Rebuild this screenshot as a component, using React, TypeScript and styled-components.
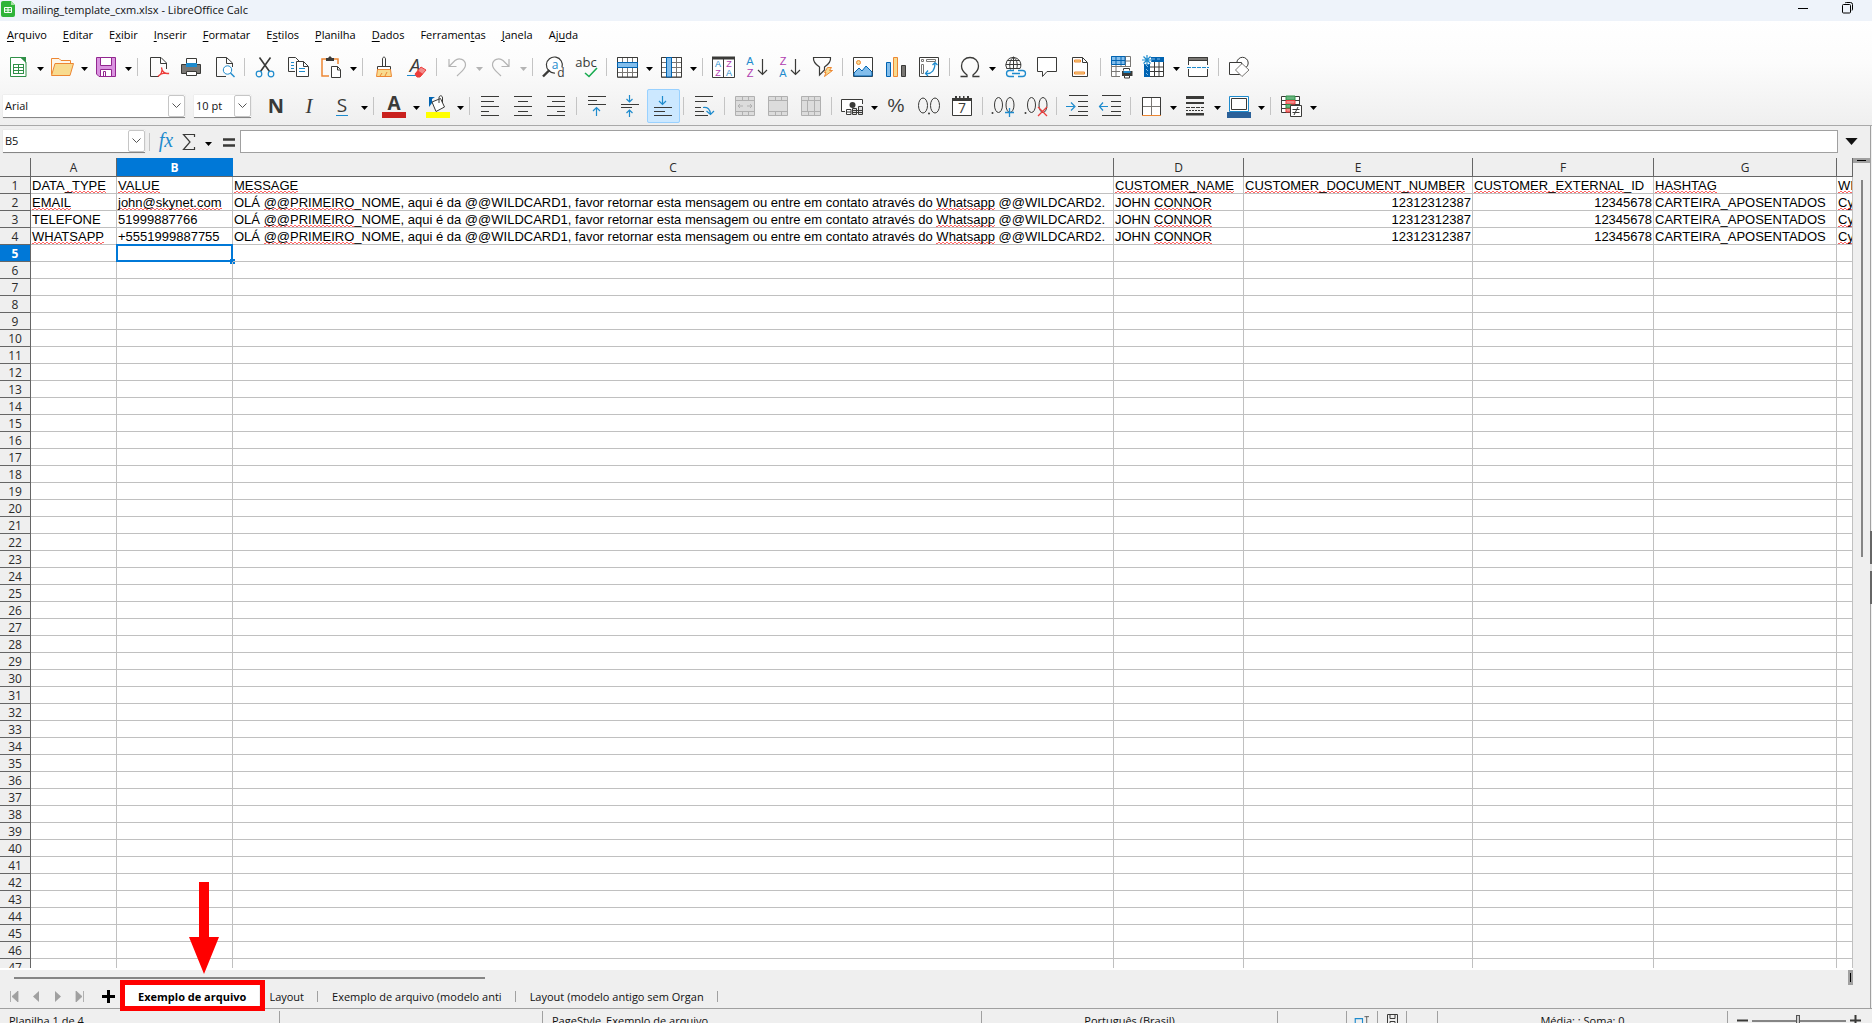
import React from "react";
import styled, { createGlobalStyle, css } from "styled-components";

const C = {
  ink: "#3a3a38",
  gray: "#797774",
  blue: "#1e8bcd",
  sky: "#83beec",
  navy: "#0063b1",
  orange: "#ed8733",
  cream: "#f8db8f",
  green: "#309048",
  purple: "#92278f",
  magenta: "#b03cb0",
  lilac: "#da93e0",
  red: "#ed3d3b",
  off: "#b4b4b4",
  panel: "#efefef",
  line: "#a0a0a0",
  accent: "#0078d7",
};

const UI = `"Open Sans", "Noto Sans", sans-serif`;
const SHEET = `"Liberation Sans", Arial, sans-serif`;

const GlobalStyle = createGlobalStyle`
  *, *::before, *::after { box-sizing: border-box; }
  body { margin: 0; overflow: hidden; background: ${C.panel}; }
  button, input, select { font: inherit; color: inherit; margin: 0; padding: 0; border: 0; border-radius: 0; background: none; }
`;

const Window = styled.div`
  display: flex;
  flex-direction: column;
  height: 100vh;
  font: 11px/16px ${UI};
  color: #111;
`;

/* ---------- title and menus ---------- */

const TitleBar = styled.header`
  display: flex;
  align-items: center;
  height: 21px;
  padding-right: 2px;
  background: #eef3fa;
  svg { display: block; }
`;
const Title = styled.h1`
  flex: 1;
  margin: 0 0 2px 7px;
  font: 11px/16px ${UI};
`;
const WindowButton = styled.button`
  display: flex;
  justify-content: center;
  align-items: flex-start;
  width: 45px;
  height: 18px;
`;
const Chrome = styled.div`
  background: linear-gradient(#fff, #fcfcfc 40%, #efefef);
  border-bottom: 1px solid #a9a9a9;
  padding-bottom: 2px;
`;
const MenuBar = styled.nav`
  display: flex;
  gap: 16px;
  height: 29px;
  padding: 0 7px 2px;
`;
const MenuItem = styled.button`
  color: #000;
  u { text-underline-offset: 2px; }
`;

/* ---------- toolbars ---------- */

const Toolbar = styled.div<{ $spaced?: boolean }>`
  display: flex;
  align-items: center;
  height: 34px;
  padding-left: ${(p) => (p.$spaced ? 3 : 2)}px;
  margin-top: ${(p) => (p.$spaced ? 5 : 0)}px;
`;
const Tool = styled.button<{ $active?: boolean }>`
  flex: none;
  width: 33px;
  height: 34px;
  padding: 0 5px 0 4px;
  svg { display: block; overflow: visible; }
  ${(p) =>
    p.$active &&
    css`
      background: #cce8ff;
      outline: 1px solid #99d1ff;
      outline-offset: -1px;
      border-radius: 2px;
    `}
`;
const Drop = styled.button<{ $off?: boolean; $width?: number }>`
  flex: none;
  display: flex;
  justify-content: center;
  align-items: center;
  width: ${(p) => p.$width ?? 11}px;
  height: 24px;
  padding-top: 4px;
  color: ${(p) => (p.$off ? C.off : "#000")};
`;
const Divider = styled.span`
  flex: none;
  width: 1px;
  height: 18px;
  margin: 0 4px 0 3px;
  background: #c4c4c4;
`;

const Combo = styled.div<{ $width: number }>`
  flex: none;
  display: grid;
  grid-template-columns: 1fr 17px;
  width: ${(p) => p.$width}px;
  height: 23px;
  margin-right: 9px;
  background: #fff;
  border-bottom: 1px solid #868686;
  box-shadow: 0 0 1px #ccc;
  select, input {
    grid-area: 1 / 1 / 2 / 3;
    width: 100%;
    padding-left: 2px;
    appearance: none;
    outline: none;
  }
`;
const ComboArrow = styled.span`
  grid-area: 1 / 2 / 2 / 3;
  display: flex;
  align-items: center;
  justify-content: center;
  border: 1px solid #c6c6c6;
  border-radius: 2px;
  background: #fff;
  pointer-events: none;
`;

/* ---------- workspace ---------- */

const Workspace = styled.main`
  flex: 1;
  min-height: 0;
  display: flex;
  background: ${C.panel};
`;
const Document = styled.div`
  flex: 1;
  min-width: 0;
  display: flex;
  flex-direction: column;
`;
const Sidebar = styled.aside`
  display: flex;
  align-items: center;
  width: 2px;
  background: linear-gradient(90deg, ${C.line} 1px, ${C.panel} 1px);
`;
const SidebarHandle = styled.button`
  width: 2px;
  height: 73px;
  && { background: linear-gradient(#666 33px, #ddd 33px 40px, #666 40px); }
`;
const FormulaBar = styled.div`
  display: flex;
  align-items: center;
  height: 32px;
  padding: 0 0 1px 3px;
  ${Combo} { margin-right: 1px; }
`;
const FormulaButton = styled.button`
  flex: none;
  width: 23px;
  height: 24px;
  svg { display: block; overflow: visible; }
`;
const FormulaInput = styled.input`
  flex: 1;
  min-width: 0;
  height: 23px;
  && {
    background: #fff;
    border: 1px solid ${C.line};
    padding: 0 4px;
  }
`;
const ExpandButton = styled.button`
  width: 26px;
  margin-right: 6px;
  svg { display: block; margin: auto; }
`;

const GridRow = styled.div`
  flex: 1;
  min-height: 0;
  display: flex;
`;
const GridPane = styled.div`
  flex: 1;
  min-width: 0;
  overflow: hidden;
  background: linear-gradient(${C.panel} 18px, #fff 18px);
`;
const GridClip = styled.div`
  height: calc(100% - 2px);
  overflow: hidden;
`;
const Sheet = styled.table`
  width: 100%;
  table-layout: fixed;
  border-collapse: separate;
  border-spacing: 0;
  th, td { padding: 0; }
`;
const ColHead = styled.th<{ $on?: boolean }>`
  height: 19px;
  && { padding-top: 1px; }
  font: ${(p) => (p.$on ? "bold" : "normal")} 12px/17px ${UI};
  color: ${(p) => (p.$on ? "#fff" : "#2a2a2a")};
  background: ${(p) => (p.$on ? C.accent : C.panel)};
  border-right: 1px solid ${(p) => (p.$on ? C.accent : "#666")};
  border-bottom: 1px solid #666;
`;
const RowHead = styled.th<{ $on?: boolean }>`
  height: 17px;
  && { padding-top: 2px; }
  font: ${(p) => (p.$on ? "bold" : "normal")} 12px/14px ${UI};
  color: ${(p) => (p.$on ? "#fff" : "#2a2a2a")};
  background: ${(p) => (p.$on ? C.accent : C.panel)};
  border-right: 1px solid #666;
  border-bottom: 1px solid #666;
`;
const Cell = styled.td<{ $num?: boolean; $cursor?: boolean }>`
  position: relative;
  height: 17px;
  font: 13px/14px ${SHEET};
  color: #000;
  white-space: nowrap;
  text-align: ${(p) => (p.$num ? "right" : "left")};
  && { padding: 2px 1px 0; }
  overflow: ${(p) => (p.$cursor ? "visible" : "hidden")};
  border-right: 1px solid #c0c0c0;
  border-bottom: 1px solid #c0c0c0;
`;
const Cursor = styled.span`
  position: absolute;
  inset: -1px -1px -1px -1px;
  border: 2px solid ${C.accent};
  &::after {
    content: "";
    position: absolute;
    right: -4px;
    bottom: -4px;
    width: 5px;
    height: 5px;
    background: ${C.accent};
  }
`;
const Typo = styled.span`
  display: inline-block;
  height: 14px;
  vertical-align: top;
  background:
    linear-gradient(90deg, #ff6464 2px, transparent 2px) 0 100% / 4px 1px repeat-x,
    linear-gradient(90deg, transparent 2px, #ff6464 2px) 0 calc(100% - 1px) / 4px 1px repeat-x;
`;

const VScroll = styled.div`
  width: 17px;
  display: flex;
  flex-direction: column;
  align-items: center;
`;
const VSplit = styled.button`
  width: 17px;
  height: 5px;
  && { background: linear-gradient(#000, #000) center / 9px 1px no-repeat ${C.line}; }
`;
const VThumb = styled.div`
  width: 2px;
  height: 46.4%;
  margin-top: 17px;
  background: #858585;
`;
const HScroll = styled.div`
  display: flex;
  align-items: center;
  justify-content: space-between;
  height: 15px;
  padding: 0 17px 0 14px;
`;
const HThumb = styled.div`
  width: 25.6%;
  height: 2px;
  background: #858585;
`;
const HSplit = styled.button`
  width: 5px;
  height: 15px;
  && { background: linear-gradient(#000, #000) center / 1px 9px no-repeat ${C.line}; }
`;

const TabBar = styled.div`
  display: flex;
  height: 23px;
  padding-left: 3px;
`;
const NavButton = styled.button<{ $wide?: boolean }>`
  width: ${(p) => (p.$wide ? 34 : 22)}px;
  svg { display: block; margin: auto; }
`;
const Tab = styled.button<{ $current?: boolean }>`
  position: relative;
  padding: 0 14px;
  ${(p) =>
    p.$current
      ? css`
          && { background: #fff; }
          padding: 0 13px;
          margin-right: -4px;
          font-weight: bold;
          color: #000;
        `
      : css`
          &::after {
            content: "";
            position: absolute;
            right: 0;
            top: 6px;
            width: 1px;
            height: 11px;
            background: ${C.line};
          }
        `}
`;
const Highlight = styled.span`
  position: absolute;
  z-index: 2;
  inset: -5px -6px -3px -5px;
  border: 5px solid #f00;
  svg {
    position: absolute;
    left: 64px;
    bottom: 32px;
  }
`;

const StatusBar = styled.footer`
  display: grid;
  grid-template-columns: 280fr 263fr 439fr 296fr 69px 31px 29px 31px 290fr 142px;
  height: 15px;
  padding-right: 2px;
  overflow: hidden;
  background: ${C.panel};
  border-top: 1px solid ${C.line};
`;
const Status = styled.div<{ $center?: boolean }>`
  height: 24px;
  margin-top: 2px;
  padding: 0 9px;
  line-height: 19px;
  white-space: nowrap;
  text-align: ${(p) => (p.$center ? "center" : "left")};
  border-right: 1px solid ${C.line};
  &:last-child { border: 0; }
  svg { display: block; margin: 3px auto; }
`;
const ZoomBox = styled.div`
  display: flex;
  align-items: flex-start;
  gap: 4px;
  padding-top: 1px;
  button { width: 11px; }
  button svg { margin: 3px 0 0; }
`;
const ZoomRange = styled.input`
  flex: 1;
  min-width: 0;
  height: 17px;
  appearance: none;
  && { background: linear-gradient(#858585, #858585) center / 100% 2px no-repeat; }
  &::-webkit-slider-thumb {
    appearance: none;
    width: 4px;
    height: 11px;
    background: #ccc;
    border: 1px solid #555;
  }
`;

/* ---------- icons, all drawn on a 24 by 24 field ---------- */

const L = ({ d, c = C.ink, f = "none", w = 1 }: { d: string; c?: string; f?: string; w?: number }) => (
  <path d={d} stroke={c} fill={f} strokeWidth={w} />
);
const FACES: Record<string, string> = {
  serif: "Liberation Serif, serif",
  plain: "Liberation Sans, sans-serif",
  ui: "Open Sans, sans-serif",
};
const T = ({ x, y, s, c = C.ink, b, i, children, face = "ui" }: any) => (
  <text
    x={x}
    y={y}
    fontSize={s}
    fill={c}
    fontWeight={b ? 700 : 400}
    fontStyle={i ? "italic" : "normal"}
    textAnchor="middle"
    fontFamily={FACES[face]}
  >
    {children}
  </text>
);

const table = "M2.5 2.5H22.5V22.5H2.5ZM7.5 2.5V22.5M12.5 2.5V22.5M17.5 2.5V22.5M2.5 7.5H22.5M2.5 12.5H22.5M2.5 17.5H22.5";
const merged = (inner: string) => (
  <>
    <L d="M2.5 2.5H21.5V21.5H2.5Z" c="#b0b0b0" f="#dcdcdc" />
    <L d={"M2.5 6.5H21.5M2.5 17.5H21.5M9.5 2.5V6.5M15.5 2.5V6.5M9.5 17.5V21.5M15.5 17.5V21.5" + inner} c="#b0b0b0" />
  </>
);

const ICONS: Record<string, React.ReactNode> = {
  new: (
    <>
      <L d="M4.5 2.5H15L20 7V21.5H4.5Z" c={C.green} f="#fff" />
      <path d="M14 2H20V8Z" fill={C.green} />
      <L d="M7 9.5H18M7 12.5H18M7 15.5H18M7 18.5H18M7.5 9V19M12.5 9V19M17.5 9V19" c={C.green} />
    </>
  ),
  open: (
    <>
      <L d="M1.5 19.5V3.5H9L11 5.5H20.5V8" c={C.orange} f="#fdf6ea" />
      <L d="M1.5 20.5L5 8.5H23.5L20 20.5Z" c={C.orange} f={C.cream} />
    </>
  ),
  save: (
    <>
      <L d="M2.5 2.5H21.5V21.5H5L2.5 19Z" c={C.purple} f={C.lilac} />
      <L d="M6.5 2.5H17.5V10.5H6.5Z" c={C.purple} f="#fff" />
      <L d="M6.5 21.5V14.5H17.5V21.5ZM9.5 21V16.5H11.5V21" c={C.purple} f="#fff" />
    </>
  ),
  pdf: (
    <>
      <L d="M13 21.5H4.5V2.5H15L20.5 8V14M14.5 2.5V8.5H20" />
      <L d="M12 21.5C15 20 17 16 15.5 12.5C16 17 19 19 23 18.5C18 17.5 14.5 18.5 12 21.5Z" c={C.red} w={1.3} />
    </>
  ),
  print: (
    <>
      <L d="M7.5 9V3.5H17.5V9" f="#fff" />
      <path d="M2.5 9.500H21.500V18.500H2.500Z" fill={C.gray} stroke={C.ink} />
      <path d="M7 8H18V12H7Z" fill={C.blue} />
      <L d="M7.5 16.5H17.5V20.5H7.5Z" f="#fff" />
    </>
  ),
  preview: (
    <>
      <L d="M20.5 12V8L14.5 2.5H4.5V21.5H14M14.5 2.5V8.5H20" />
      <circle cx="15.5" cy="15" r="4.2" fill="#fff" stroke={C.blue} />
      <L d="M18.5 18L22.5 22" c={C.blue} w={1.4} />
    </>
  ),
  cut: (
    <>
      <L d="M6.5 2.5L16.5 16.5M17.5 2.5L7.5 16.5" w={1.6} />
      <circle cx="6" cy="19" r="2.8" fill="none" stroke={C.blue} strokeWidth="1.2" />
      <circle cx="18" cy="19" r="2.8" fill="none" stroke={C.blue} strokeWidth="1.2" />
    </>
  ),
  copy: (
    <>
      <L d="M9 16.5H2.5V2.5H9.5L13.5 6.5" />
      <L d="M10.5 6.5H17.5L22.5 11.5V21.5H10.5ZM17.5 6.5V11.5H22" f="#fff" />
      <L d="M5 7.5H8M5 10.5H8M13 13.5H19M13 16.5H19M5 13.5H8" c={C.blue} />
    </>
  ),
  paste: (
    <>
      <L d="M10 21H3V4H19V9" c={C.orange} w={1.5} />
      <path d="M7 6V3H9L11 1L13 3H15V6Z" fill={C.ink} />
      <L d="M12.5 11.5H18.5L21.5 14.5V22.5H12.5ZM18.5 11.5V15H21" f="#fff" />
    </>
  ),
  brush: (
    <>
      <L d="M11.5 11V4C11.5 1.5 14.5 1.5 14.5 4V11" />
      <L d="M6.5 15V11.5H19.5V15" f="#fff" />
      <L d="M6.5 14.5H19.5L20.5 21.5H5.5Z" c={C.orange} f={C.cream} />
      <L d="M9 21L11 18M14 21L16 17" c={C.orange} />
    </>
  ),
  clear: (
    <>
      <T x={11} y={17} s={19} i>A</T>
      <L d="M3 20.5H12" c={C.blue} />
      <path d="M11 19L17 12L22 15L16 22H13Z" fill="#f28b8b" stroke={C.red} />
      <path d="M11 19L14 15.5L19 19L16 22H13Z" fill={C.red} />
    </>
  ),
  undo: <L d="M4 4V11.500H11.500M4.500 11L10 5.500C14 2 20.500 4.500 20.500 10C20.500 14 17 16 12 21" c={C.off} w={1.2} />,
  redo: <L d="M20 4V11.500H12.500M19.500 11L14 5.500C10 2 3.500 4.500 3.500 10C3.500 14 7 16 12 21" c={C.off} w={1.2} />,
  find: (
    <>
      <path d="M21 12.500A8 8 0 1 0 14 18" fill="#fff" stroke={C.ink} strokeWidth="1.2" />
      <L d="M8.5 15L2 21.5" w={2.4} />
      <T x={14} y={14} s={12} c={C.blue}>a</T>
      <T x={20} y={22} s={12}>d</T>
    </>
  ),
  abc: (
    <>
      <T x={12} y={12} s={13}>abc</T>
      <L d="M11 18L15 21.5L23 13" c="#18ab50" w={1.6} />
    </>
  ),
  rowTable: (
    <>
      <L d={table} c={C.gray} f="#fff" />
      <L d="M2.5 2.5H22.5V22H2.5Z" />
      <L d="M2.5 7.5H22.5V12.5H2.5Z" c={C.navy} f={C.sky} />
    </>
  ),
  colTable: (
    <>
      <L d={table} c={C.gray} f="#fff" />
      <L d="M2.5 2.5H22.5V22H2.5Z" />
      <L d="M7.5 2.5V22H12.5V2.5Z" c={C.navy} f={C.sky} />
    </>
  ),
  sort: (
    <>
      <L d="M1.5 2.5H23.5V22.5H1.5ZM12.5 2V22" f="#fff" />
      <path d="M1 1.5H24V4.5H1Z" fill={C.ink} />
      <T x={7} y={12} s={9} c={C.blue} face="plain">A</T>
      <T x={7} y={21} s={9} c={C.magenta} face="plain">Z</T>
      <T x={18} y={12} s={9} c={C.magenta} face="plain">Z</T>
      <T x={18} y={21} s={9} c={C.blue} face="plain">A</T>
    </>
  ),
  az: (
    <>
      <T x={6} y={10} s={11} c={C.blue} face="plain">A</T>
      <T x={6} y={22} s={11} c={C.magenta} face="plain">Z</T>
      <L d="M18.5 4V19M14 15L18.5 19.5L23 15" w={1.2} />
    </>
  ),
  za: (
    <>
      <T x={6} y={10} s={11} c={C.magenta} face="plain">Z</T>
      <T x={6} y={22} s={11} c={C.blue} face="plain">A</T>
      <L d="M18.5 4V19M14 15L18.5 19.5L23 15" w={1.2} />
    </>
  ),
  filter: (
    <>
      <L d="M3.5 2.5H20.5C21 6 19 9 14.5 12V15L9.5 20V12C5 9 3 6 3.5 2.5Z" w={1.2} />
      <path d="M17.500 12.500H21.500L19.500 15.500H22.500L14.500 21.500L16 17.500H14.500Z" fill={C.cream} stroke={C.orange} />
    </>
  ),
  image: (
    <>
      <L d="M2.5 2.5H21.5V21.5H2.5Z" f="#fff" />
      <path d="M3 21V18L8 13L11 16L15 11L21 17V21Z" fill={C.sky} stroke={C.navy} />
      <circle cx="7.5" cy="7.5" r="2" fill={C.cream} stroke={C.orange} />
    </>
  ),
  chart: (
    <>
      <L d="M2.5 7.5H6.5V21.5H2.5Z" c={C.navy} f={C.sky} />
      <L d="M9.5 2.5H13.5V21.5H9.5Z" c={C.orange} f={C.cream} />
      <L d="M17.5 10.5H21.5V21.5H17.5Z" f={C.gray} />
    </>
  ),
  pivot: (
    <>
      <L d="M2.5 2.5H21.5V21.5H2.5Z" f="#fff" />
      <L d="M4.5 4.5H6.5V6.5H4.5ZM9.5 4.5H18.5V6.5H9.5ZM4.5 9.5H6.5V18.5H4.5Z" c={C.gray} />
      <L d="M9 18.5C15 19 18 15 18 8M15.5 10L18 7.5L20.5 10M11 15.5L8.5 18.5L11 21" c={C.blue} w={1.2} />
    </>
  ),
  omega: <L d="M2.5 21.5H9V20C5 17 3.5 14 3.5 11C3.5 5.5 7.5 2.5 12 2.5S20.5 5.5 20.5 11C20.5 14 19 17 15 20V21.5H21.5" w={1.3} />,
  link: (
    <>
      <path d="M12 2.500A7.500 7.500 0 0 0 5 14M4 9.500H19M5.500 5.500H17.500M5 13.500H18M11.500 2V14.500M11.500 2C7.500 5 7 11 8.500 14.500M11.500 2C15.500 5 16 11 14.500 14M11.500 2.500A7.500 7.500 0 0 1 18 13.500" fill="none" stroke={C.ink} />
      <path d="M12 15.500H7.500A3 3 0 0 0 7.500 21.500H12M16 15.500H20.500A3 3 0 0 1 20.500 21.500H16M10 18.500H18" fill="none" stroke={C.blue} strokeWidth="1.3" />
    </>
  ),
  comment: <L d="M2.5 2.5H21.5V16.5H12L7.5 21.5V16.5H2.5Z" f="#fff" />,
  header: (
    <>
      <L d="M4.5 2.5H14.5L19.5 7.5V21.5H4.5ZM14.5 2.5V7.5H19" f="#fff" />
      <L d="M6.5 5H12.5V7H6.5ZM6.5 17H16.5V19H6.5Z" c={C.orange} f={C.cream} />
    </>
  ),
  printArea: (
    <>
      <L d="M2.5 1.5H21.5V21.5H2.5ZM2.5 6H21M2.5 11.5H21M2.5 16.5H21M7 2V21M12 2V21M16.5 2V21" c={C.gray} f="#fff" />
      <L d="M2.5 1.5H16V9.5H2.5ZM2.5 5.5H16M7 1.5V9.5M12 1.5V9.5" c={C.navy} f={C.sky} />
      <path d="M11 12H24V24H11Z" fill="#fcfcfc" />
      <path d="M13 16H23.5V21H13Z" fill={C.ink} />
      <L d="M14.5 15.500V13.5H20.5V15.500M15.5 20.500H20.500V23H15.5Z" f="#fff" />
      <path d="M14.500 16H21.500V18H14.500Z" fill={C.blue} />
    </>
  ),
  freeze: (
    <>
      <L d="M2.5 2.5H21.5V21.5H2.5ZM8 12H21M8 16.5H21M12.5 7V21M17 7V21" f="#fff" />
      <path d="M2 2H22V7H8V22H2Z" fill={C.navy} />
      <path d="M10 4H13M15 4H18M4 10L6 12M4 14L6 16M4 18L6 20" stroke={C.sky} />
      <circle cx="5" cy="5" r="4.5" fill="#fff" />
      <L d="M5 0V10M0 5H10M1.5 1.5L8.5 8.5M8.5 1.5L1.5 8.5" c={C.blue} w={1.2} />
    </>
  ),
  split: (
    <>
      <L d="M2.5 10V2.5H21.5V10M2.5 14V21.5H21.5V14" f="#fff" />
      <path d="M2.500 2.500H21.500V5.500H2.500Z" fill={C.gray} stroke={C.ink} />
      <path d="M1 12.5H23" stroke={C.blue} strokeDasharray="4 1" />
    </>
  ),
  shapes: (
    <>
      <circle cx="15.5" cy="8" r="5.7" fill="#fff" stroke={C.ink} />
      <L d="M2.5 7.5H14.5V19.5H2.5Z" f="#fff" />
      <path d="M15 8.5L22 15L15 21.5L8.5 15Z" fill="#fff" stroke={C.gray} />
    </>
  ),
  bold: <T x={12} y={19} s={20} b>N</T>,
  italic: <T x={12} y={19} s={21} i face="serif">I</T>,
  underline: (
    <>
      <T x={12} y={18} s={19}>S</T>
      <L d="M6 21.5H18" c={C.blue} />
    </>
  ),
  fontColor: (
    <>
      <T x={12} y={16} s={19} b>A</T>
      <path d="M0 18H24V24H0Z" fill="#c9211e" />
    </>
  ),
  fill: (
    <>
      <path d="M3 13V3H9L6 5V9Z" fill={C.navy} />
      <L d="M6 8L14.5 4.5L18.5 13L10 17.5ZM13 9V4C13 1 16.5 1 16.5 4V9" f="#fff" />
      <path d="M0 18H24V24H0Z" fill="#ff0" />
    </>
  ),
  left: <L d="M3 2.5H21M3 7.5H16M3 12.5H21M3 17.5H11M3 21.5H21" w={1.2} />,
  center: <L d="M3 2.5H21M7 7.5H17M3 12.5H21M7 17.5H17M3 21.5H21" w={1.2} />,
  right: <L d="M3 2.5H21M8 7.5H21M3 12.5H21M13 17.5H21M3 21.5H21" w={1.2} />,
  top: (
    <>
      <L d="M3 2.5H21M3 6.5H12M3 10.5H21" w={1.2} />
      <L d="M11.5 22V14M8 17L11.5 13.5L15 17" c={C.blue} w={1.2} />
    </>
  ),
  middle: (
    <>
      <L d="M3 10.5H21M3 13.5H14" w={1.2} />
      <L d="M11.5 1V8M8.5 5L11.5 8L14.5 5M11.5 23V16M8.5 19L11.5 16L14.5 19" c={C.blue} w={1.2} />
    </>
  ),
  bottom: (
    <>
      <L d="M3 13.5H21M3 17.5H14M3 21.5H21" w={1.2} />
      <L d="M11.5 2V10M8 7L11.5 10.5L15 7" c={C.blue} w={1.2} />
    </>
  ),
  wrap: (
    <>
      <L d="M3 2.5H21M3 7.5H15M3 13.5H9M3 17.5H12M3 21.5H16" w={1.2} />
      <L d="M11 13.5C16 13 18 15 18.5 20M14.5 17L18.5 20.5L22 17" c={C.blue} w={1.2} />
    </>
  ),
  merge1: merged("M5 12H10M14 12H19M7 10L5 12L7 14M17 10L19 12L17 14"),
  merge2: merged(""),
  merge3: merged("M8.5 6V17M15.5 6V17"),
  currency: (
    <>
      <L d="M5 17.5H1.5V5.5H22.5V10" f="#fff" />
      <circle cx="12.5" cy="11" r="3" fill={C.ink} />
      <L d="M6.5 15.5H11V20.5H6.5ZM6.5 18H11" f="#fff" />
      <L d="M12.5 14.5H16.500V20.5H12.5ZM18.5 12.5H22.5V20.5H18.5ZM12.5 16.500H22M12.5 18.5H22" f="#ddd" />
    </>
  ),
  percent: <T x={12} y={18} s={19} face="plain">%</T>,
  decimal: (
    <>
      <ellipse cx="6" cy="11.5" rx="4.5" ry="7.5" fill="none" stroke={C.ink} />
      <ellipse cx="18" cy="11.5" rx="4.5" ry="7.5" fill="none" stroke={C.ink} />
      <circle cx="12" cy="19.5" r="1" fill={C.ink} />
    </>
  ),
  date: (
    <>
      <L d="M2.5 5.5H21.5V21.5H2.5Z" f="#fff" />
      <path d="M2 4H22V7H2ZM5 2H7V5H5ZM17 2H19V5H17ZM9 2H10.5V5H9ZM13 2H14.5V5H13Z" fill={C.ink} />
      <T x={12} y={19} s={14}>7</T>
    </>
  ),
  addDec: (
    <>
      <circle cx="1.5" cy="19" r="1" fill={C.ink} />
      <ellipse cx="7.5" cy="11" rx="4" ry="7.5" fill="none" stroke={C.ink} />
      <ellipse cx="19" cy="11" rx="4" ry="7.5" fill="none" stroke={C.ink} />
      <L d="M18.5 14V23M14 18.5H23" c={C.blue} w={1.3} />
    </>
  ),
  delDec: (
    <>
      <circle cx="1.5" cy="19" r="1" fill={C.ink} />
      <ellipse cx="7.5" cy="11" rx="4" ry="7.5" fill="none" stroke={C.ink} />
      <ellipse cx="19" cy="11" rx="4" ry="7.5" fill="none" stroke={C.ink} />
      <L d="M14 13L23 22M23 13L14 22" c={C.red} w={1.3} />
    </>
  ),
  indent: (
    <>
      <L d="M4 1.5H23M13 7.5H23M13 12.5H23M13 17.5H23M4 21.5H23" w={1.2} />
      <L d="M1 12.5H9M6 8.5L10 12.5L6 16.5" c={C.blue} w={1.2} />
    </>
  ),
  outdent: (
    <>
      <L d="M4 1.5H23M13 7.5H23M13 12.5H23M13 17.5H23M4 21.5H23" w={1.2} />
      <L d="M2 12.5H10M5 8.5L1.5 12.5L5 16.5" c={C.blue} w={1.2} />
    </>
  ),
  borders: (
    <>
      <L d="M3.5 21V3.5H21.5V21M12.5 3.5V21M3.5 12.5H21.5" c={C.gray} f="#fff" />
      <L d="M3.5 21V3.5H21.5V21" />
      <L d="M3 21.5H22" c={C.orange} />
    </>
  ),
  lines: (
    <>
      <path d="M3 2H21V5H3ZM3 8H21V10H3ZM3 19H21V21.5H3Z" fill={C.ink} />
      <path d="M3 13.5H21" stroke={C.ink} strokeDasharray="4 1" />
      <path d="M3 16.5H21" stroke={C.ink} strokeDasharray="2 1" />
    </>
  ),
  lineColor: (
    <>
      <L d="M2.5 2.5H21.5V17.5H2.5Z" c={C.blue} f="#fff" />
      <L d="M4.5 4.5H19.5V15.5H4.5Z" f="#fff" />
      <path d="M0 18H24V24H0Z" fill="#2a6099" />
    </>
  ),
  conditional: (
    <>
      <L d="M2.5 2.5H20.5V18.5H2.5ZM2.5 6.5H20M2.5 10.5H20M2.5 14.5H20" f="#fff" />
      <path d="M7 2H16V6H7Z" fill="#68b57e" stroke={C.green} />
      <path d="M7 6.5H16V10H7ZM7 14.5H12V18H7Z" fill="#f28b8b" stroke={C.red} />
      <path d="M7 10.5H12V14H7Z" fill="#68b57e" stroke={C.green} />
      <L d="M11.5 11.5H22.5V22.5H11.5Z" f="#fff" />
      <L d="M13.5 15.5H20.5M13.5 18.5H20.5M19 13L15 21" />
    </>
  ),
  fx: <T x={12} y={17} s={20} c={C.blue} i face="serif">fx</T>,
  sigma: <L d="M17.5 7V4.5H6.5L13 12L6.5 19.5H17.5V17" w={1.2} />,
  equals: <L d="M6 9.5H18M6 15.5H18" w={2.4} />,
};

const Icon = ({ name }: { name: string }) => (
  <svg width="24" height="24" viewBox="0 0 24 24" aria-hidden="true">
    {ICONS[name]}
  </svg>
);
const Triangle = ({ size = 7 }: { size?: number }) => (
  <svg width={size} height={(size + 1) / 2} viewBox="0 0 7 4" aria-hidden="true">
    <path d="M0 0H7L3.5 4Z" fill="currentColor" />
  </svg>
);
const Chevron = () => (
  <svg width="9" height="6" viewBox="0 0 9 6" aria-hidden="true">
    <path d="M.5 .5L4.5 4.5L8.5 .5" fill="none" stroke="#555" />
  </svg>
);

/* "|" is a divider, ":v" adds a drop-down arrow, ":-" greys that arrow, ":!" marks the pressed tool */
const STANDARD =
  "new:v open:v save:v | pdf print preview | cut copy paste:v | brush clear | undo:- redo:- | find abc | rowTable:v colTable:v | sort az za filter | image chart pivot | omega:v link comment header | printArea freeze:v split | shapes";
const FORMATTING =
  "bold italic underline:v | fontColor:v fill:v | left center right | top middle bottom:! | wrap | merge1 merge2 merge3 | currency:v percent decimal date | addDec delDec | indent outdent | borders:v lines:v lineColor:v | conditional:v";

const Tools = ({ items }: { items: string }) => (
  <>
    {items.split(" ").map((item, i) => {
      if (item === "|") return <Divider key={i} />;
      const [name, flag] = item.split(":");
      return (
        <React.Fragment key={i}>
          <Tool type="button" aria-label={name} $active={flag === "!"}>
            <Icon name={name} />
          </Tool>
          {(flag === "v" || flag === "-") && (
            <Drop type="button" aria-label={`${name} menu`} $off={flag === "-"}>
              <Triangle />
            </Drop>
          )}
        </React.Fragment>
      );
    })}
  </>
);

/* ---------- data ---------- */

const MENUS = ["_Arquivo", "_Editar", "E_xibir", "_Inserir", "_Formatar", "E_stilos", "_Planilha", "_Dados", "Ferramen_tas", "_Janela", "Aj_uda"];
const COLUMNS: [string, number?][] = [["A", 86], ["B", 116], ["C", 881], ["D", 130], ["E", 229], ["F", 181], ["G", 183], [""]];

/* words between ~ marks carry the spelling underline */
const MESSAGE =
  "OLÁ ~@@PRIMEIRO~_NOME, aqui é da @@WILDCARD1, favor retornar esta mensagem ou entre em contato através do ~Whatsapp~ @@WILDCARD2.";
const record = (type: string, value: string) => [type, value, MESSAGE, "JOHN ~CONNOR~", "12312312387", "12345678", "CARTEIRA_APOSENTADOS", "~Cy~"];
const ROWS = [
  ["DATA~_TYPE~", "~VALUE~", "~MESSAGE~", "~CUSTOMER_NAME~", "~CUSTOMER_DOCUMENT_NUMBER~", "~CUSTOMER_EXTERNAL~_ID", "~HASHTAG~", "~WI~"],
  record("~EMAIL~", "~john@skynet.com~"),
  record("TELEFONE", "51999887766"),
  record("~WHATSAPP~", "+5551999887755"),
];
const TABS = ["Layout", "Exemplo de arquivo (modelo anti", "Layout (modelo antigo sem Organ"];

const spell = (text: string) => text.split("~").map((part, i) => (i % 2 ? <Typo key={i}>{part}</Typo> : part));

export default function App() {
  return (
    <Window>
      <GlobalStyle />
      <TitleBar>
        <svg width="15" height="21" viewBox="0 0 15 21" aria-hidden="true">
          <path d="M1 3Q1 1 3 1H11L15 5V15Q15 17 13 17H3Q1 17 1 15Z" fill="#2fb43a" />
          <path d="M11 1L15 5H11Z" fill="#a5e3a3" />
          <path d="M4.5 7.5H11.5V12.5H4.5ZM4.5 10H11.5M8 7.5V12.5" fill="none" stroke="#fff" />
        </svg>
        <Title>mailing_template_cxm.xlsx - LibreOffice Calc</Title>
        <WindowButton type="button" aria-label="Minimizar">
          <svg width="10" height="14" viewBox="0 0 10 14"><path d="M0 6.5H10" stroke="#000" /></svg>
        </WindowButton>
        <WindowButton type="button" aria-label="Restaurar">
          <svg width="11" height="12" viewBox="0 0 11 12">
            <path d="M.5 3.5Q.5 2.5 1.5 2.5H7.5Q8.5 2.5 8.5 3.5V10Q8.5 11 7.5 11H1.5Q.5 11 .5 10ZM3 1Q3.5 .5 4.5 .5H8.5Q10.5 .5 10.5 2.5V7Q10.5 8 10 8.5" fill="none" stroke="#000" />
          </svg>
        </WindowButton>
      </TitleBar>

      <Chrome>
        <MenuBar>
          {MENUS.map((label) => {
            const [before, rest] = label.split("_");
            return (
              <MenuItem type="button" key={label}>
                {before}
                <u>{rest[0]}</u>
                {rest.slice(1)}
              </MenuItem>
            );
          })}
        </MenuBar>
        <Toolbar>
          <Tools items={STANDARD} />
        </Toolbar>
        <Toolbar $spaced>
          <Combo $width={182}>
            <select aria-label="Nome da fonte"><option>Arial</option></select>
            <ComboArrow><Chevron /></ComboArrow>
          </Combo>
          <Combo $width={57}>
            <select aria-label="Tamanho da fonte"><option>10 pt</option></select>
            <ComboArrow><Chevron /></ComboArrow>
          </Combo>
          <Tools items={FORMATTING} />
        </Toolbar>
      </Chrome>

      <Workspace>
        <Document>
          <FormulaBar>
            <Combo $width={142}>
              <input aria-label="Caixa de nome" defaultValue="B5" />
              <ComboArrow><Chevron /></ComboArrow>
            </Combo>
            <Divider />
            <FormulaButton type="button" aria-label="Assistente de funções"><Icon name="fx" /></FormulaButton>
            <FormulaButton type="button" aria-label="Soma"><Icon name="sigma" /></FormulaButton>
            <Drop type="button" aria-label="Mais funções" $width={17}><Triangle /></Drop>
            <FormulaButton type="button" aria-label="Fórmula"><Icon name="equals" /></FormulaButton>
            <FormulaInput aria-label="Linha de entrada" />
            <ExpandButton type="button" aria-label="Expandir"><Triangle size={13} /></ExpandButton>
          </FormulaBar>

          <GridRow>
            <GridPane>
              <GridClip>
                <Sheet>
                  <colgroup>
                    <col style={{ width: 31 }} />
                    {COLUMNS.map(([name, width]) => (
                      <col key={name} style={{ width }} />
                    ))}
                  </colgroup>
                  <thead>
                    <tr>
                      <ColHead />
                      {COLUMNS.map(([name]) => (
                        <ColHead key={name} scope="col" $on={name === "B"}>{name}</ColHead>
                      ))}
                    </tr>
                  </thead>
                  <tbody>
                    {Array.from({ length: 47 }, (_, r) => (
                      <tr key={r}>
                        <RowHead scope="row" $on={r === 4}>{r + 1}</RowHead>
                        {COLUMNS.map(([name], c) => {
                          const cursor = r === 4 && c === 1;
                          return (
                            <Cell key={name} $num={r > 0 && (c === 4 || c === 5)} $cursor={cursor}>
                              {ROWS[r] && spell(ROWS[r][c])}
                              {cursor && <Cursor />}
                            </Cell>
                          );
                        })}
                      </tr>
                    ))}
                  </tbody>
                </Sheet>
              </GridClip>
            </GridPane>
            <VScroll>
              <VSplit type="button" aria-label="Dividir linhas" />
              <VThumb />
            </VScroll>
          </GridRow>

          <HScroll>
            <HThumb />
            <HSplit type="button" aria-label="Dividir colunas" />
          </HScroll>

          <TabBar>
            {["M1.5 0V11M9 0V11L3 5.5Z", "M8 0V11L2 5.5Z", "M2 0V11L8 5.5Z", "M1 0V11L7 5.5ZM8.5 0V11"].map((d, i) => (
              <NavButton type="button" key={d} aria-label={["Primeira", "Anterior", "Próxima", "Última"][i]}>
                <svg width="10" height="11" viewBox="0 0 10 11">
                  <path d={d} fill={C.line} stroke={i % 3 ? "none" : C.line} strokeWidth=".8" />
                </svg>
              </NavButton>
            ))}
            <NavButton type="button" $wide aria-label="Adicionar planilha">
              <svg width="13" height="13" viewBox="0 0 13 13"><path d="M0 6.5H13M6.5 0V13" stroke="#000" strokeWidth="3" /></svg>
            </NavButton>
            <Tab type="button" $current>
              Exemplo de arquivo
              <Highlight>
                <svg width="30" height="92" viewBox="0 0 30 92" aria-hidden="true">
                  <path d="M10 0H20V55H30L15 92L0 55H10Z" fill="#f00" />
                </svg>
              </Highlight>
            </Tab>
            {TABS.map((name) => (
              <Tab type="button" key={name}>{name}</Tab>
            ))}
          </TabBar>
        </Document>
        <Sidebar>
          <SidebarHandle type="button" aria-label="Mostrar barra lateral" />
        </Sidebar>
      </Workspace>

      <StatusBar>
        <Status>Planilha 1 de 4</Status>
        <Status />
        <Status>PageStyle_Exemplo de arquivo</Status>
        <Status $center>Português (Brasil)</Status>
        <Status />
        <Status>
          <svg width="13" height="16" viewBox="0 0 17 16" overflow="visible">
            <path d="M-1 3.5H8.5V11.5H-1Z" fill="none" stroke={C.blue} strokeWidth="1.5" />
            <path d="M11 1H17M14 1V14M11 14H17" stroke={C.ink} fill="none" />
          </svg>
        </Status>
        <Status>
          <svg width="11" height="16" viewBox="0 0 11 16">
            <path d="M.5 .5H10.5V11.5H2L.5 10ZM3 .5V4.5H8V.5M3 11V7.5H8V11" fill="none" stroke={C.ink} />
          </svg>
        </Status>
        <Status />
        <Status $center>Média: ; Soma: 0</Status>
        <Status>
          <ZoomBox>
            <button type="button" aria-label="Reduzir"><svg width="11" height="11"><path d="M0 5.5H11" stroke={C.ink} strokeWidth="2" /></svg></button>
            <ZoomRange type="range" aria-label="Zoom" defaultValue={49} />
            <button type="button" aria-label="Ampliar"><svg width="11" height="11"><path d="M0 5.5H11M5.5 0V11" stroke={C.ink} strokeWidth="2" /></svg></button>
          </ZoomBox>
        </Status>
      </StatusBar>
    </Window>
  );
}
